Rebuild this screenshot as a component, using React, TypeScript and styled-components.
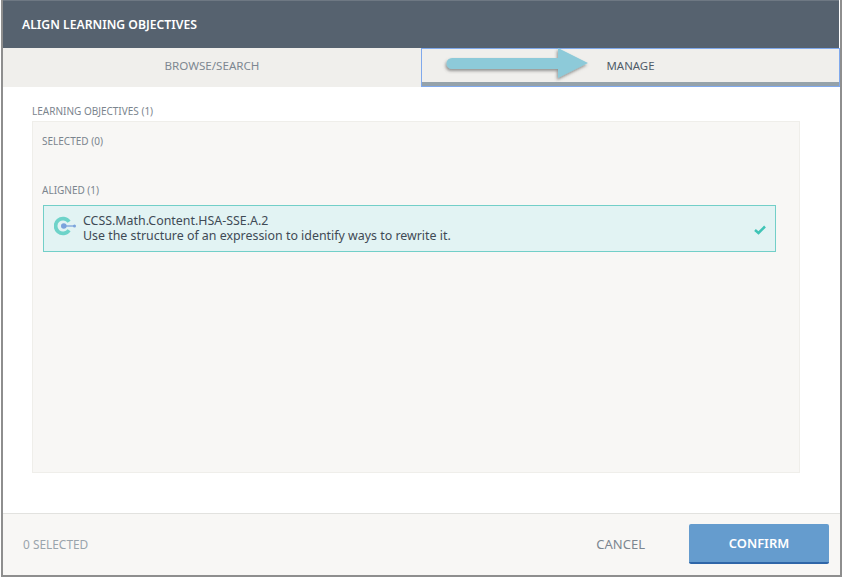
import styled, { createGlobalStyle } from "styled-components";

const GlobalStyle = createGlobalStyle`
  html, body {
    margin: 0;
    padding: 0;
    background: #fff;
  }
  body {
    font-family: "Noto Sans", "DejaVu Sans", sans-serif;
  }
`;

const Modal = styled.div`
  box-sizing: border-box;
  width: 841px;
  height: 577px;
  margin-left: 1px;
  display: flex;
  flex-direction: column;
  background: #fff;
  border-left: 2px solid #8e8e8e;
  border-right: 2px solid #8e8e8e;
  border-bottom: 2px solid #8e8e8e;
`;

const Header = styled.div`
  box-sizing: border-box;
  height: 48px;
  flex: none;
  margin-right: 1px;
  border-top: 1px solid #6e7883;
  padding-left: 19px;
  display: flex;
  align-items: center;
  background: #56626f;
  color: #fff;
  font-size: 12.2px;
  font-weight: 600;
`;

const Tabs = styled.div`
  display: grid;
  grid-template-columns: 418px 1fr;
  height: 39px;
  flex: none;
`;

const Tab = styled.div<{ $active?: boolean }>`
  position: relative;
  box-sizing: border-box;
  display: flex;
  align-items: center;
  justify-content: center;
  padding-bottom: 4px;
  background: #f0efec;
  font-size: ${(p) => (p.$active ? "11.4px" : "11.6px")};
  color: ${(p) => (p.$active ? "#4f5b68" : "#7d8791")};
  ${(p) =>
    p.$active &&
    `
    border: 1px solid #80a9ec;
    box-shadow: inset 0 -4px 0 #95a2aa;
  `}
`;

const Arrow = styled.svg`
  position: absolute;
  left: 0;
  top: 0;
  overflow: visible;
`;

const Body = styled.div`
  flex: 1;
  display: flex;
  flex-direction: column;
  padding: 18px 40px 40px 29px;
  min-height: 0;
`;

const SmallLabel = styled.div`
  font-size: 10px;
  line-height: 12px;
  color: #7b858e;
`;

const Panel = styled.div`
  box-sizing: border-box;
  flex: 1;
  margin-top: 4px;
  padding: 13px 10px 13px 9px;
  background: #f8f7f5;
  border: 1px solid #efeeea;
  display: flex;
  flex-direction: column;
`;

const AlignedLabel = styled(SmallLabel)`
  margin-top: 37px;
`;

const Objective = styled.div`
  box-sizing: border-box;
  width: 733px;
  height: 47px;
  margin: 9px 0 0 1px;
  padding: 0 9px 0 10px;
  display: flex;
  align-items: center;
  background: #e2f3f3;
  border: 1px solid #72cfc8;
`;

const ObjectiveIcon = styled.svg`
  flex: none;
  margin-bottom: 6px;
`;

const ObjectiveText = styled.div`
  flex: 1;
  margin-left: 7px;
  padding-bottom: 2px;
  font-size: 12.4px;
  line-height: 15px;
  color: #3f4a55;
`;

const CheckIcon = styled.svg`
  flex: none;
  margin-top: 2px;
`;

const Footer = styled.div`
  box-sizing: border-box;
  height: 62px;
  flex: none;
  display: flex;
  align-items: center;
  padding: 0 11px 2px 20px;
  background: #f8f7f5;
  border-top: 1px solid #e2e2df;
`;

const SelectedCount = styled.div`
  flex: 1;
  font-size: 11.9px;
  color: #9aa4ac;
`;

const CancelButton = styled.div`
  margin-right: 44px;
  font-size: 13px;
  color: #7c8690;
`;

const ConfirmButton = styled.div`
  box-sizing: border-box;
  width: 140px;
  height: 40px;
  display: flex;
  align-items: center;
  justify-content: center;
  background: #659cce;
  border-bottom: 2px solid #2f66a8;
  border-radius: 2px;
  color: #fff;
  font-size: 12.9px;
  font-weight: 600;
`;

const App = () => {
  return (
    <>
      <GlobalStyle />
      <Modal>
        <Header>ALIGN LEARNING OBJECTIVES</Header>
        <Tabs>
          <Tab>BROWSE/SEARCH</Tab>
          <Tab $active>
            MANAGE
            <Arrow width="170" height="34" viewBox="0 0 170 34">
              <defs>
                <filter id="arrowShadow" x="-10%" y="-30%" width="120%" height="170%">
                  <feDropShadow dx="-1" dy="2" stdDeviation="1.5" floodColor="#555" floodOpacity="0.6" />
                </filter>
              </defs>
              <path
                d="M30 9 H136 V-1 L166 14 L136 29 V20 H30 A5.5 5.5 0 0 1 30 9 Z"
                fill="#8dcad9"
                filter="url(#arrowShadow)"
              />
            </Arrow>
          </Tab>
        </Tabs>
        <Body>
          <SmallLabel>LEARNING OBJECTIVES (1)</SmallLabel>
          <Panel>
            <SmallLabel>SELECTED (0)</SmallLabel>
            <AlignedLabel>ALIGNED (1)</AlignedLabel>
            <Objective>
              <ObjectiveIcon width="22" height="20" viewBox="0 0 22 20">
                <path d="M15.1 5.8 A7.4 7.4 0 1 0 15.1 14.2" fill="none" stroke="#6dd3c9" strokeWidth="3.7" />
                <circle cx="9.8" cy="10" r="2.8" fill="#7ba3dc" />
                <path d="M10 10 H21" stroke="#7ba3dc" strokeWidth="1.3" />
                <circle cx="20.5" cy="10" r="1.5" fill="#7ba3dc" />
              </ObjectiveIcon>
              <ObjectiveText>
                <div>CCSS.Math.Content.HSA-SSE.A.2</div>
                <div>Use the structure of an expression to identify ways to rewrite it.</div>
              </ObjectiveText>
              <CheckIcon width="12" height="10" viewBox="0 0 12 10">
                <path d="M1 5 L4.5 8 L11 1.5" fill="none" stroke="#3fc4b6" strokeWidth="2.5" />
              </CheckIcon>
            </Objective>
          </Panel>
        </Body>
        <Footer>
          <SelectedCount>0 SELECTED</SelectedCount>
          <CancelButton>CANCEL</CancelButton>
          <ConfirmButton>CONFIRM</ConfirmButton>
        </Footer>
      </Modal>
    </>
  );
};

export default App;
